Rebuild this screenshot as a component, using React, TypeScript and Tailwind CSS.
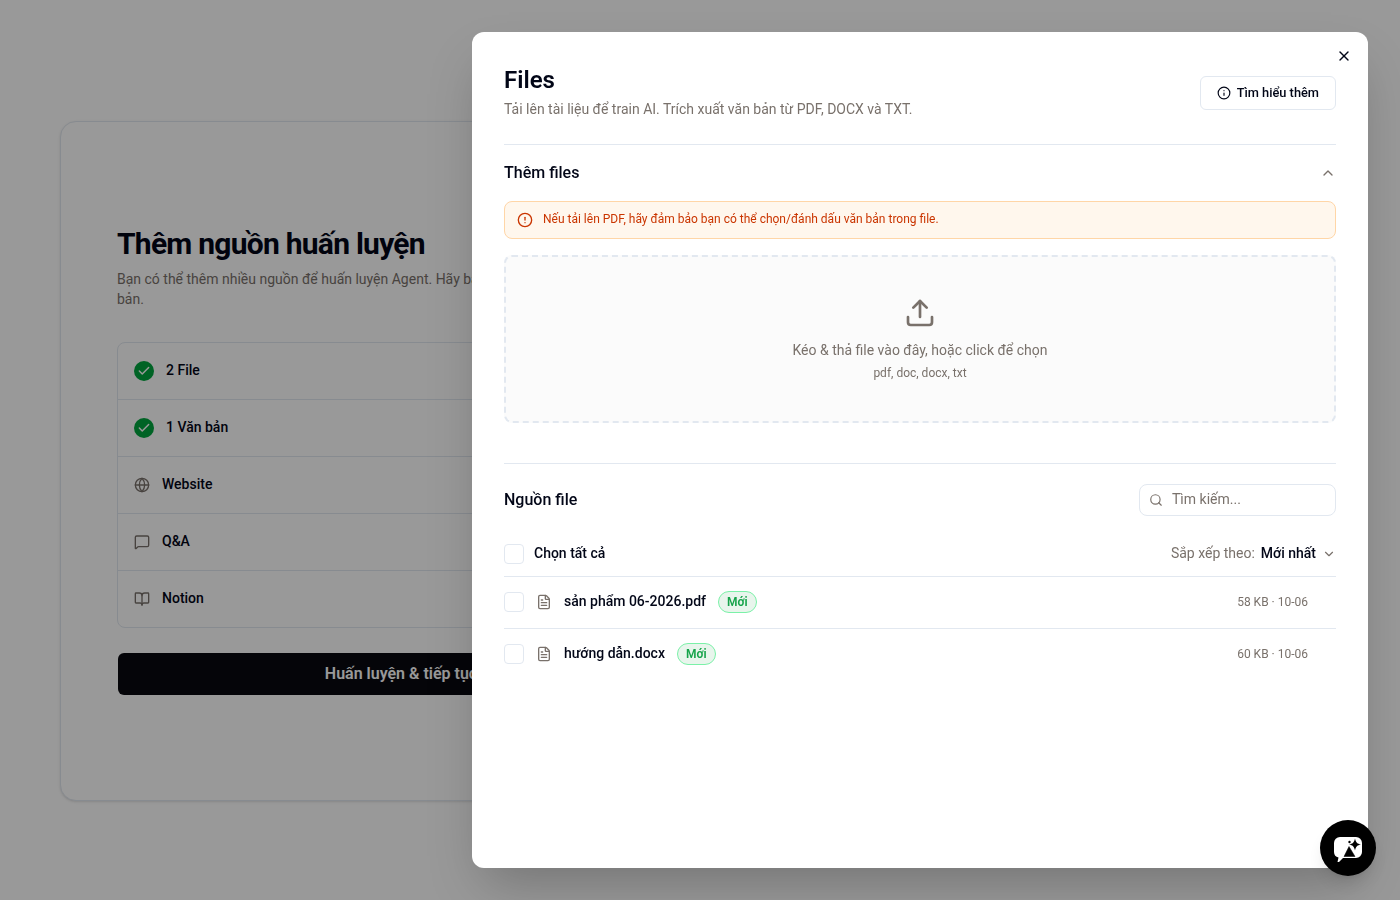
import { useState } from "react";
import {
  BookOpen,
  Check,
  ChevronDown,
  ChevronUp,
  CircleAlert,
  FileText,
  Globe,
  Info,
  MessageSquare,
  Search,
  Upload,
  X,
} from "lucide-react";

const sources = [
  { label: "2 File", done: true },
  { label: "1 Văn bản", done: true },
  { label: "Website", icon: Globe },
  { label: "Q&A", icon: MessageSquare },
  { label: "Notion", icon: BookOpen },
];

const files = [
  { name: "sản phẩm 06-2026.pdf", meta: "58 KB · 10-06" },
  { name: "hướng dẫn.docx", meta: "60 KB · 10-06" },
];

function Checkbox({ label }: { label: string }) {
  const [checked, setChecked] = useState(false);

  return (
    <button
      role="checkbox"
      aria-checked={checked}
      aria-label={label}
      onClick={() => setChecked((prev) => !prev)}
      className="flex size-5 shrink-0 items-center justify-center rounded border border-slate-200 bg-white"
    >
      {checked && <Check className="size-3.5" />}
    </button>
  );
}

function SourcesPage() {
  return (
    <main className="h-full px-[60px] pt-[121px]">
      <div className="h-[680px] rounded-2xl border border-slate-200 bg-white px-14 pt-[104px] shadow-sm">
        <div className="w-[568px]">
          <h1 className="text-3xl leading-9 font-bold tracking-tight">
            Thêm nguồn huấn luyện
          </h1>
          <p className="mt-[7px] text-sm text-stone-500">
            Bạn có thể thêm nhiều nguồn để huấn luyện Agent. Hãy bắt đầu với file hoặc văn
            <br />
            bản.
          </p>
          <ul className="mt-[33px] divide-y divide-slate-200 rounded-lg border border-slate-200">
            {sources.map(({ label, done, icon: Icon }) => (
              <li key={label} className="box-content flex h-14 items-center gap-3 px-4 text-sm font-medium">
                {done && (
                  <span className="flex size-5 items-center justify-center rounded-full bg-[#00a63e] text-white">
                    <Check className="size-3.5" strokeWidth={2.5} />
                  </span>
                )}
                {Icon && <Icon className="size-4 text-stone-500" />}
                <span className="-mt-0.5">{label}</span>
              </li>
            ))}
          </ul>
          <button className="mt-[25px] ml-px h-[42px] w-[566px] rounded-md bg-[#09090f] font-semibold text-white">
            Huấn luyện &amp; tiếp tục
          </button>
        </div>
      </div>
    </main>
  );
}

function FilesPanel() {
  const [open, setOpen] = useState(true);

  return (
    <section className="absolute top-8 right-8 bottom-8 w-[896px] rounded-xl bg-white px-8 pt-8 shadow-2xl will-change-transform">
      <button aria-label="Đóng" className="absolute top-4 right-4">
        <X className="size-4" />
      </button>

      <header className="flex h-[81px] items-start justify-between border-b border-slate-200">
        <div>
          <h2 className="text-2xl leading-8 font-semibold">Files</h2>
          <p className="mt-[3px] text-sm text-stone-500">
            Tải lên tài liệu để train AI. Trích xuất văn bản từ PDF, DOCX và TXT.
          </p>
        </div>
        <button className="mt-3 flex h-[34px] items-center gap-1.5 rounded-md border border-slate-200 px-4 text-[12.8px] font-medium">
          <Info className="size-3.5" />
          Tìm hiểu thêm
        </button>
      </header>

      <div className="flex h-14 items-center justify-between">
        <h3 className="text-base font-medium">Thêm files</h3>
        <button aria-label="Thu gọn" onClick={() => setOpen((prev) => !prev)}>
          <ChevronUp className="size-4 text-stone-500" />
        </button>
      </div>

      {open && (
        <>
          <div className="flex h-[38px] items-center gap-2.5 rounded-lg border border-[#ffd6a7] bg-orange-50 px-3 text-xs text-[#ca3500]">
            <CircleAlert className="size-4" />
            <span className="-mt-0.5">
              Nếu tải lên PDF, hãy đảm bảo bạn có thể chọn/đánh dấu văn bản trong file.
            </span>
          </div>
          <div className="mt-4 flex h-[168px] flex-col items-center rounded-lg border-2 border-dashed border-slate-200 bg-[#fbfbfb] pt-10 text-stone-500">
            <Upload className="size-8" />
            <p className="mt-[11px] text-sm">Kéo &amp; thả file vào đây, hoặc click để chọn</p>
            <p className="mt-[5px] text-xs">pdf, doc, docx, txt</p>
          </div>
        </>
      )}

      <div className="mt-10 flex items-center justify-between border-t border-slate-200 pt-5">
        <h3 className="text-base font-medium">Nguồn file</h3>
        <label className="flex h-8 w-[197px] items-center gap-[9px] rounded-lg border border-slate-200 px-[9px]">
          <Search className="size-3.5 shrink-0 text-stone-500" />
          <input
            placeholder="Tìm kiếm..."
            className="w-full pb-0.5 text-sm outline-none placeholder:text-stone-500"
          />
        </label>
      </div>

      <div className="mt-4 flex h-[45px] items-center gap-2.5 border-b border-slate-200 text-sm">
        <Checkbox label="Chọn tất cả" />
        <span className="-mt-0.5 font-medium">Chọn tất cả</span>
        <span className="-mt-0.5 ml-auto text-stone-500">Sắp xếp theo:</span>
        <button className="-ml-1 flex items-center gap-1.5 font-medium">
          <span className="-mt-0.5">Mới nhất</span>
          <ChevronDown className="size-3.5 text-stone-500" />
        </button>
      </div>

      <ul className="divide-y divide-slate-200">
        {files.map((file) => (
          <li key={file.name} className="flex h-[52px] items-center pb-0.5">
            <Checkbox label={file.name} />
            <FileText className="ml-3 size-4 text-stone-500" />
            <span className="-mt-0.5 ml-3 text-sm font-medium">{file.name}</span>
            <span className="ml-3 flex h-[22px] items-center rounded-full border border-[#7bf1a8] bg-[#e8f5ec] px-2 text-xs font-semibold text-[#16a34a]">
              Mới
            </span>
            <span className="mr-7 ml-auto text-xs text-stone-500">{file.meta}</span>
          </li>
        ))}
      </ul>
    </section>
  );
}

function ChatButton() {
  return (
    <button
      aria-label="Chat"
      className="absolute right-6 bottom-6 flex size-14 items-center justify-center rounded-full bg-black shadow-lg"
    >
      <svg viewBox="0 0 28 28" className="size-7">
        <path
          d="M6 3h16a6 6 0 0 1 6 6v9a6 6 0 0 1-6 6H9L4.500 28.500 3.500 28 4.500 23.600A6 6 0 0 1 0 18V9a6 6 0 0 1 6-6Z"
          fill="#fff"
        />
        <path d="M15 12.500 21 22.500H10Z" fill="#000" stroke="#000" strokeWidth="0.500" strokeLinejoin="round" />
        <path
          d="M21 4.500c.9 4 2.300 5.400 6 6-3.700.600-5.100 2-6 6-.9-4-2.300-5.400-6-6 3.700-.6 5.100-2 6-6Z"
          fill="#000"
        />
        <circle cx="15.500" cy="8" r="1.200" fill="#000" />
      </svg>
    </button>
  );
}

export default function App() {
  return (
    <div className="relative h-screen overflow-hidden bg-white font-[Roboto,sans-serif] text-[#020617]">
      <SourcesPage />
      <div className="absolute inset-0 bg-black/40" />
      <FilesPanel />
      <ChatButton />
    </div>
  );
}
